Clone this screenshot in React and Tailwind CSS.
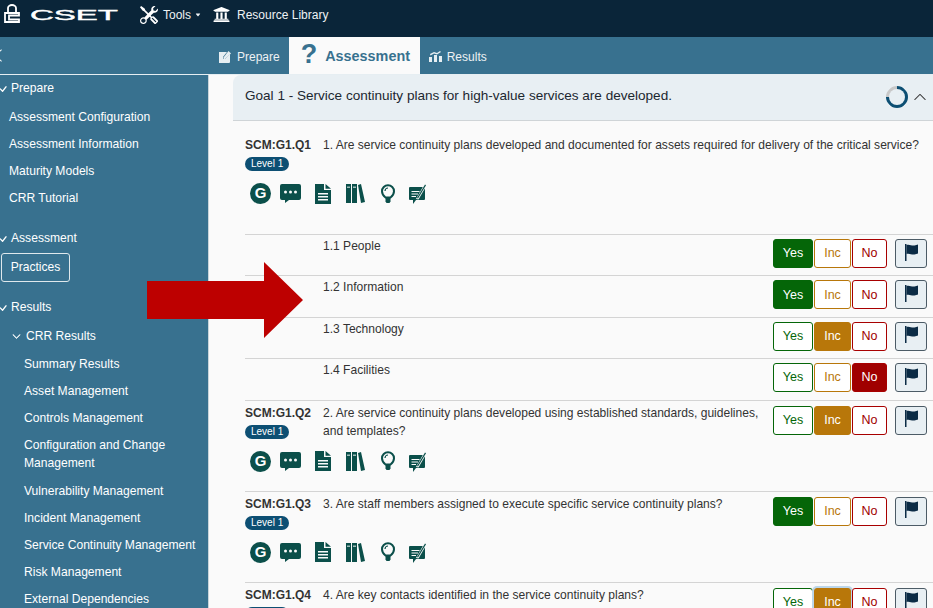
import React from 'react';
import { BsTools, BsChevronUp, BsChevronDown, BsCheck, BsChevronLeft, BsCaretDownFill } from 'react-icons/bs';
import { FaUniversity } from 'react-icons/fa';

const sans = { fontFamily: '"Liberation Sans", Arial, sans-serif' };

const LockIcon = () => (
  <svg width="16" height="19" viewBox="0 0 16 19" fill="none" stroke="white" strokeWidth="1.800" className="-mt-[3px]">
    <path d="M4 8V4a4 3 0 0 1 8 0v4" />
    <path d="M15 9H1v9h14v-2.500H5v-4h10z" />
  </svg>
);

const EditIcon = () => (
  <svg width="12" height="12" viewBox="0 0 12 12" fill="#e6eef2">
    <path d="M0 1h8L4 6v2h2l5-5v8a1 1 0 0 1-1 1H0z" />
    <path d="M9.5 0 12 2.5 6 8H4.500V6.500z" />
  </svg>
);

const ChartIcon = () => (
  <svg width="13" height="11" viewBox="0 0 13 11" fill="#e6eef2">
    <path d="M0 6h3v5H0zM5 4h3v7H5zM10 5h3v6h-3z" />
    <path d="M1 3l4-2 3 1 3-2 1 1-4 2.500-3-1-3.500 2z" />
  </svg>
);

const FlagIcon = () => (
  <svg width="13" height="17" viewBox="0 0 13 17" fill="currentColor" className="-mt-[3px]">
    <path d="M0 0h1.500v17H0z" />
    <path d="M1.500 1c3-1 5 1 8 .5 1.200-.2 2.500-.5 3.500-1v9c-1 .5-2.300.8-3.500 1-3 .5-5-1.500-8-.5z" />
  </svg>
);

const ChatIcon = () => (
  <svg width="21" height="19" viewBox="0 0 21 19" fill="#0b4f4a">
    <path d="M2 0h17a2 2 0 0 1 2 2v12a2 2 0 0 1-2 2H9l-4 3v-3H2a2 2 0 0 1-2-2V2a2 2 0 0 1 2-2z" />
    <circle cx="5.500" cy="8" r="1.500" fill="#fafafa" />
    <circle cx="10.500" cy="8" r="1.500" fill="#fafafa" />
    <circle cx="15.500" cy="8" r="1.500" fill="#fafafa" />
  </svg>
);

const DocIcon = () => (
  <svg width="16" height="20" viewBox="0 0 16 20" fill="#0b4f4a">
    <path d="M0 0h9v6h7v14H0z" />
    <path d="M10.500 0 16 4.800h-5.500z" />
    <path d="M3 9h10v1.500H3zM3 12h10v1.500H3zM3 15h10v1.500H3z" fill="#fafafa" />
  </svg>
);

const BooksIcon = () => (
  <svg width="19" height="19" viewBox="0 0 19 19" fill="#0b4f4a">
    <path d="M0 0h5v19H0zM6 0h5v19H6zM12 1l3-1 4 18-4 1z" />
    <path d="M1 2.500h3v1.500H1zM7 2.500h3v1.500H7z" fill="#9fbdb9" />
  </svg>
);

const BulbIcon = () => (
  <svg width="14" height="20" viewBox="0 0 14 20" fill="none" stroke="#0b4f4a" strokeWidth="2">
    <path d="M4.500 13.500C2.500 12 1 10 1 7.200a6 6 0 0 1 12 0c0 2.800-1.500 4.800-3.500 6.300z" />
    <path d="M4 7a3 3 0 0 1 3-3" strokeWidth="1.200" />
    <path d="M4.500 13h5v4.500l-1 1.500h-3l-1-1.500z" fill="#0b4f4a" stroke="none" />
  </svg>
);

const NoteIcon = () => (
  <svg width="18" height="21" viewBox="0 0 18 21" fill="#0b4f4a">
    <path d="M1 4h14a1 1 0 0 1 1 1v11a1 1 0 0 1-1 1H7l-3 4v-4H1a1 1 0 0 1-1-1V5a1 1 0 0 1 1-1z" />
    <path d="M2.500 8h8v1h-8zM2.500 10.500h6.500v1H2.500zM2.500 13h4.500v1H2.500z" fill="#fafafa" />
    <path d="M7 16 15.800 0.500 18 1.800 9.500 16.500z" fill="#fafafa" />
    <path d="M8 15 16 1.500 17 2.200 9 15.500z" />
  </svg>
);

const GIcon = () => (
  <div className="flex h-[21px] w-[21px] items-center justify-center rounded-full bg-[#0b4f4a] text-[15px] font-bold text-white">G</div>
);

const QuestionIcons = () => (
  <div className="flex h-[21px] items-center">
    <div className="ml-[5px] flex w-[30px]"><GIcon /></div>
    <div className="flex w-[35px]"><ChatIcon /></div>
    <div className="flex w-[31px]"><DocIcon /></div>
    <div className="flex w-[35px]"><BooksIcon /></div>
    <div className="flex w-[28px]"><BulbIcon /></div>
    <div className="flex"><NoteIcon /></div>
  </div>
);

const Answers = ({ value, focused }) => (
  <div className="flex shrink-0 items-start text-[12.5px]">
    <div className={`flex h-[29px] w-[40px] items-center justify-center rounded-[3px] border border-[#056608] ${value === 'yes' ? 'bg-[#056608] text-white' : 'bg-white text-[#056608]'}`}>Yes</div>
    <div className={`ml-[1px] flex h-[29px] w-[37px] items-center justify-center rounded-[3px] border border-[#b8770a] ${value === 'inc' ? 'bg-[#b8770a] text-white' : 'bg-white text-[#b8770a]'} ${focused ? 'ring-2 ring-[#bcd6ea]' : ''}`}>Inc</div>
    <div className={`ml-[1px] flex h-[29px] w-[35px] items-center justify-center rounded-[3px] border border-[#a80000] ${value === 'no' ? 'bg-[#a00000] text-white' : 'bg-white text-[#a00000]'}`}>No</div>
    <div className="ml-[8px] flex h-[29px] w-[32px] items-center justify-center rounded-[3px] border border-[#4c5b66] bg-[#e8eff3] text-[#0b2b45]">
      <FlagIcon />
    </div>
  </div>
);

const SubRow = ({ label, value }) => (
  <div className="flex h-[41.400px] justify-between border-t border-[#d4d4d4] pt-[4px] pr-[6px]">
    <div className="pl-[78px] text-[12.060px] leading-[14px] text-[#333]">{label}</div>
    <Answers value={value} />
  </div>
);

const Question = ({ code, lines, value, focused, border = true, height = 'h-[91px] pt-[3px]' }) => (
  <div className={`flex justify-between pr-[6px] ${height} ${border ? 'border-t border-[#d4d4d4]' : ''}`}>
    <div className="min-w-0 flex-1">
      <div className="flex h-[36px] text-[12.060px] leading-[18px] text-[#333]">
        <div className="w-[78px] shrink-0">
          <div className="text-[12px] font-bold">{code}</div>
          <div className="mt-[3px] w-fit rounded-full bg-[#0d4f73] px-[6px] text-[10px] leading-[14px] text-white">Level 1</div>
        </div>
        <div>{lines}</div>
      </div>
      <div className="mt-[11px]"><QuestionIcons /></div>
    </div>
    {value && <div className="mt-[2px]"><Answers value={value} focused={focused} /></div>}
  </div>
);

const SideItem = ({ indent = 'pl-[9px]', children }) => (
  <div className={`py-[4.500px] pr-[8px] leading-[18px] ${indent}`}>{children}</div>
);

const SideHeader = ({ className, children }) => (
  <div className={`flex h-[27px] items-center pt-[2px] ${className}`}>
    <BsCheck size={14} className="-ml-[4px] mr-[1px]" />
    {children}
  </div>
);

const Sidebar = () => (
  <aside className="h-full w-[209px] shrink-0 overflow-hidden border-r border-[#c9d4da] bg-[#38718f] text-[12.100px] text-white">
    <SideHeader className="-mt-[1px]">Prepare</SideHeader>
    <div className="mt-[2px]">
      <SideItem>Assessment Configuration</SideItem>
      <SideItem>Assessment Information</SideItem>
      <SideItem>Maturity Models</SideItem>
      <SideItem>CRR Tutorial</SideItem>
    </div>
    <SideHeader className="mt-[13px]">Assessment</SideHeader>
    <div className="mt-[2px] ml-[1px] flex h-[29px] w-[69px] items-center justify-center rounded-[3px] border border-[#dfe8ec]">Practices</div>
    <SideHeader className="mt-[11px]">Results</SideHeader>
    <div className="mt-[2px] flex h-[27px] items-center pl-[12px] pt-[2px]">
      <BsChevronDown size={9} className="mr-[5px] stroke-[1]" />
      CRR Results
    </div>
    <div className="mt-[1px]">
      <SideItem indent="pl-[24px]">Summary Results</SideItem>
      <SideItem indent="pl-[24px]">Asset Management</SideItem>
      <SideItem indent="pl-[24px]">Controls Management</SideItem>
      <SideItem indent="pl-[24px] pb-[5.500px]">Configuration and Change Management</SideItem>
      <SideItem indent="pl-[24px]">Vulnerability Management</SideItem>
      <SideItem indent="pl-[24px]">Incident Management</SideItem>
      <SideItem indent="pl-[24px]">Service Continuity Management</SideItem>
      <SideItem indent="pl-[24px]">Risk Management</SideItem>
      <SideItem indent="pl-[24px]">External Dependencies</SideItem>
    </div>
  </aside>
);

export default function App() {
  return (
    <div style={sans} className="relative flex h-[608px] w-[933px] flex-col overflow-hidden bg-[#fafafa]">
      {/* top bar */}
      <header className="flex h-[37px] shrink-0 items-center bg-[#0a2539] pb-[8px] text-[12px] text-[#eef2f4]">
        <div className="ml-[4px] flex"><LockIcon /></div>
        <div className="ml-[10px] w-[89px] shrink-0 pt-[3px]">
          <span className="inline-block origin-left scale-x-[2.2] text-[15px] leading-none text-white [-webkit-text-stroke:0.4px_white]">CSET</span>
        </div>
        <BsTools size={18} className="ml-[21px] text-white" />
        <span className="ml-[5px]">Tools</span>
        <BsCaretDownFill size={6} className="ml-[4px]" />
        <FaUniversity size={17} className="ml-[12px] text-white" />
        <span className="ml-[7px]">Resource Library</span>
      </header>

      {/* tabs */}
      <nav className="flex h-[38px] shrink-0 items-end border-b border-[#e6eef2] bg-[#38718f] text-[12px] text-[#eef2f4]">
        <BsChevronLeft size={15} className="mb-[11px] -ml-[9px] text-white" />
        <div className="ml-[213px] flex h-full items-center pt-[2px]">
          <EditIcon />
          <span className="ml-[6px]">Prepare</span>
        </div>
        <div className="ml-[9px] flex h-[37px] w-[131px] items-center bg-[#fafafa] pl-[12px] text-[#38718f]">
          <span className="-mt-[3px] text-[27px] font-bold leading-none">?</span>
          <span className="ml-[8px] pt-[2px] text-[14.400px] font-bold">Assessment</span>
        </div>
        <div className="ml-[9px] flex h-full items-center pt-[2px]">
          <ChartIcon />
          <span className="ml-[5px]">Results</span>
        </div>
      </nav>

      <div className="flex min-h-0 flex-1">
        <Sidebar />
        <main className="min-w-0 flex-1 pl-[24px]">
          <div className="flex h-[46px] items-center justify-between rounded-tl-lg border-b border-[#cfd4d7] bg-[#e8eff3] pb-[2px] pl-[12px] pr-[6px]">
            <span className="text-[13.550px] text-[#1c2730]">Goal 1 - Service continuity plans for high-value services are developed.</span>
            <div className="flex items-center">
              <div className="h-[22px] w-[22px] rotate-45 rounded-full border-[3px] border-[#0d4f73] border-l-[#c8c8c8]" />
              <BsChevronUp size={14} className="ml-[5px] text-[#333]" />
            </div>
          </div>
          <div className="pl-[12px]">
            <Question
              border={false}
              height="h-[113px] pt-[15px]"
              code="SCM:G1.Q1"
              lines="1. Are service continuity plans developed and documented for assets required for delivery of the critical service?"
            />
            <SubRow label="1.1 People" value="yes" />
            <SubRow label="1.2 Information" value="yes" />
            <SubRow label="1.3 Technology" value="inc" />
            <SubRow label="1.4 Facilities" value="no" />
            <Question code="SCM:G1.Q2" lines="2. Are service continuity plans developed using established standards, guidelines, and templates?" value="inc" />
            <Question code="SCM:G1.Q3" lines="3. Are staff members assigned to execute specific service continuity plans?" value="yes" />
            <Question code="SCM:G1.Q4" lines="4. Are key contacts identified in the service continuity plans?" value="inc" focused />
          </div>
        </main>
      </div>

      {/* red arrow overlay */}
      <svg className="absolute left-[147px] top-[262px]" width="156" height="76" viewBox="0 0 156 76">
        <path d="M0 19h117V0l39 38-39 38V57H0z" fill="#bd0000" />
      </svg>
    </div>
  );
}
